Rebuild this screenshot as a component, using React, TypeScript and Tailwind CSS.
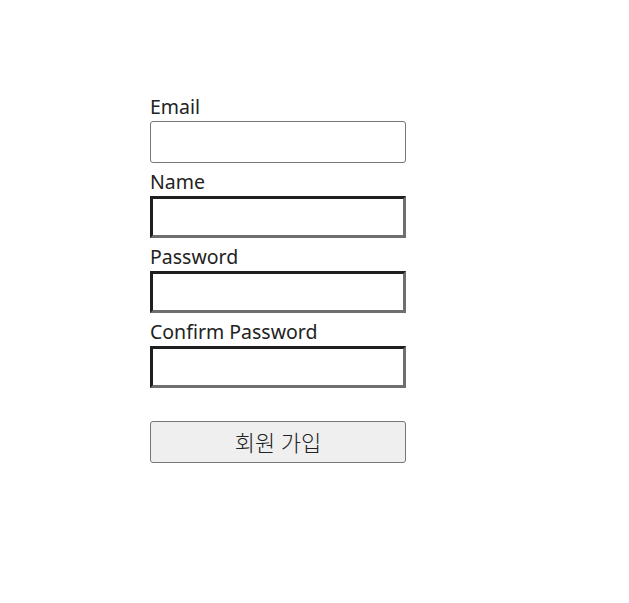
import React from "react";

const fields = [
  { label: "Email", type: "email", rounded: true },
  { label: "Name", type: "text", rounded: false },
  { label: "Password", type: "password", rounded: false },
  { label: "Confirm Password", type: "password", rounded: false },
];

export default function App() {
  return (
    <div className="min-h-[603px] bg-white pt-[96px] pl-[150px] font-['Noto_Sans','Noto_Sans_CJK_KR',sans-serif] text-[#222]">
      <form className="flex w-[256px] flex-col" onSubmit={(e) => e.preventDefault()}>
        {fields.map((f, i) => (
          <div key={f.label} className={i === 0 ? "flex flex-col" : "mt-[8px] flex flex-col"}>
            <label className="pb-[4px] text-[19.5px] leading-[21px]">{f.label}</label>
            {f.rounded ? (
              <input
                type={f.type}
                className="h-[42px] w-full rounded-[3px] border border-[#767676] bg-white outline-none"
              />
            ) : (
              <input
                type={f.type}
                className="h-[42px] w-full border-[3px] border-t-[#1f1f1f] border-l-[#1f1f1f] border-b-[#6f6f6f] border-r-[#6f6f6f] bg-white outline-none"
              />
            )}
          </div>
        ))}
        <button
          type="submit"
          className="mt-[33px] h-[42px] w-full rounded-[3px] border border-[#767676] bg-[#efefef] text-[22px] font-light leading-[40px] text-[#222]"
        >
          회원 가입
        </button>
      </form>
    </div>
  );
}
